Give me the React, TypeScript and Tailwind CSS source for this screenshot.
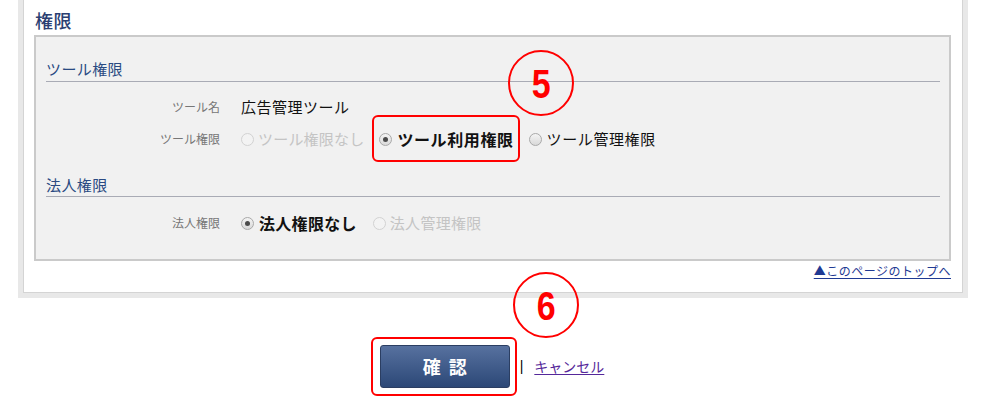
import React from "react";

const jp = { fontFamily: '"Noto Sans CJK JP", "Noto Sans", sans-serif' };

function Radio({ checked, disabled }: { checked?: boolean; disabled?: boolean }) {
  return (
    <span
      className={
        "relative inline-flex items-center justify-center w-[13px] h-[13px] rounded-full border shrink-0 " +
        (disabled
          ? "border-[#d2d2d2] bg-[#f3f3f3]"
          : "border-[#a9a9a9] bg-gradient-to-b from-[#f4f4f4] to-[#d9d9d9]")
      }
    >
      {checked && <span className="block w-[5px] h-[5px] rounded-full bg-[#4b4b4b]" />}
    </span>
  );
}

function Circle({ n, className }: { n: string; className: string }) {
  return (
    <div
      className={
        "absolute w-[66px] h-[66px] rounded-full border-2 border-[#ff0000] flex items-center justify-center " +
        className
      }
    >
      <span
        className="text-[40px] font-bold text-[#ff0000] leading-none scale-x-[0.85] translate-y-[1px]"
        style={{ fontFamily: '"Liberation Sans", Arial, sans-serif' }}
      >
        {n}
      </span>
    </div>
  );
}

export default function App() {
  return (
    <div className="relative w-[988px] h-[404px] bg-white overflow-hidden" style={jp}>
      {/* outer gray band */}
      <div className="ml-[18px] w-[950px] h-[298px] bg-[#e8e8e8] px-[5px] pb-[5px]">
        <div className="h-[293px] bg-white border-x border-b border-[#d4d4d4] pl-[10px]">
          <div className="h-[35px] pt-[8px] pl-[1px] text-[18px] leading-[24px] text-[#2b3f72] font-medium tracking-[0.5px]">
            権限
          </div>
          <div className="w-[917px] h-[226px] border-2 border-[#cacaca] bg-[#f1f1f1]">
            {/* section 1 */}
            <div className="mx-[10px] mr-[9px] pt-[22px] pb-[2px] border-b border-[#a9abb5] text-[15px] leading-[20px] text-[#2a4a82] tracking-[0.4px]">
              ツール権限
            </div>
            <div className="mt-[9px] h-[32px] flex items-center">
              <div className="w-[184px] text-right text-[12px] text-[#777]">ツール名</div>
              <div className="ml-[21px] text-[15px] text-[#111] tracking-[0.5px]">広告管理ツール</div>
            </div>
            <div className="h-[32px] flex items-center">
              <div className="w-[184px] text-right text-[12px] text-[#777]">ツール権限</div>
              <div className="ml-[21px] flex items-center gap-[15px]">
                <label className="flex items-center gap-[4px] text-[15px] text-[#c4c4c4] tracking-[0.2px]">
                  <Radio disabled />
                  ツール権限なし
                </label>
                <label className="relative flex items-center gap-[5px] text-[16px] font-bold text-[#111] tracking-[0.6px]">
                  <Radio checked />
                  ツール利用権限
                  <span className="absolute -left-[7px] -right-[6px] -top-[12px] -bottom-[11px] border-2 border-[#ff0000] rounded-[6px]" />
                </label>
                <label className="flex items-center gap-[5px] text-[15px] text-[#111] tracking-[0.6px]">
                  <Radio />
                  ツール管理権限
                </label>
              </div>
            </div>
            {/* section 2 */}
            <div className="mx-[10px] mr-[9px] pt-[20px] pb-[1px] border-b border-[#a9abb5] text-[15px] leading-[20px] text-[#2a4a82] tracking-[0.4px]">
              法人権限
            </div>
            <div className="mt-[10px] h-[32px] flex items-center">
              <div className="w-[184px] text-right text-[12px] text-[#777]">法人権限</div>
              <div className="ml-[21px] flex items-center gap-[16px]">
                <label className="flex items-center gap-[5px] text-[16px] font-bold text-[#111] tracking-[0.3px]">
                  <Radio checked />
                  法人権限なし
                </label>
                <label className="flex items-center gap-[4px] text-[15px] text-[#c4c4c4] tracking-[0.3px]">
                  <Radio disabled />
                  法人管理権限
                </label>
              </div>
            </div>
          </div>
          <div className="w-[917px] mt-[2px] flex justify-end">
            <a href="#" className="text-[12px] leading-[16px] text-[#1f3a93] underline underline-offset-[2px] tracking-[0.5px]">
              ▲このページのトップへ
            </a>
          </div>
        </div>
      </div>

      {/* bottom buttons */}
      <div className="mt-[47px] pr-[4px] flex justify-center items-center">
        <div className="relative">
          <button className="w-[130px] h-[43px] rounded-[3px] border border-[#2b3e62] bg-gradient-to-b from-[#57719f] to-[#2c4877] text-white text-[18px] font-bold tracking-[8px] pl-[8px]">
            確認
          </button>
          <span className="absolute -left-[9px] -right-[7px] -top-[8px] -bottom-[8px] border-2 border-[#ff0000] rounded-[6px]" />
        </div>
        <span className="ml-[10px] text-[14px] text-black" style={{ fontFamily: '"Liberation Sans", sans-serif' }}>|</span>
        <a href="#" className="ml-[11px] text-[14px] text-[#55289a] underline underline-offset-[2px]">
          キャンセル
        </a>
      </div>

      <Circle n="5" className="left-[508px] top-[50px]" />
      <Circle n="6" className="left-[513px] top-[272px]" />
    </div>
  );
}
